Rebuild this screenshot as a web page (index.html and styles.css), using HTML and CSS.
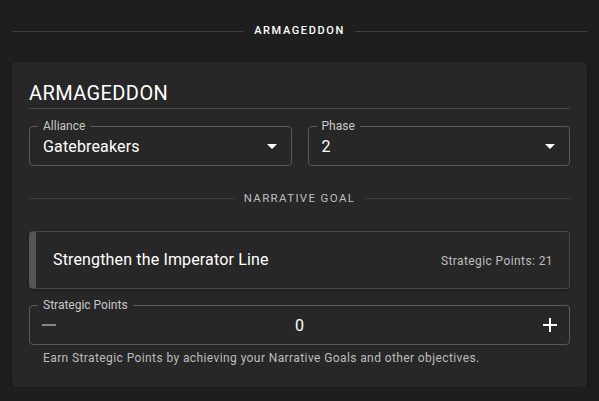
FILE: index.html
```html
<!DOCTYPE html>
<html>
<head>
<meta charset="utf-8">
<link rel="stylesheet" href="styles.css">
</head>
<body>
<div class="page">
  <div class="divider top-divider"><span class="divider-text">ARMAGEDDON</span></div>
  <div class="card">
    <h2 class="card-title">ARMAGEDDON</h2>
    <div class="row">
      <div class="field select">
        <span class="field-label">Alliance</span>
        <span class="field-value">Gatebreakers</span>
        <span class="caret"></span>
      </div>
      <div class="field select">
        <span class="field-label">Phase</span>
        <span class="field-value">2</span>
        <span class="caret"></span>
      </div>
    </div>
    <div class="divider inner-divider"><span class="divider-text muted">NARRATIVE GOAL</span></div>
    <div class="goal">
      <span class="goal-title">Strengthen the Imperator Line</span>
      <span class="goal-points">Strategic Points: 21</span>
    </div>
    <div class="field stepper">
      <span class="field-label">Strategic Points</span>
      <span class="step-btn minus"><svg width="16" height="16" viewBox="0 0 16 16"><rect x="1" y="7" width="14" height="2" fill="#8a8a8a"/></svg></span>
      <span class="step-value">0</span>
      <span class="step-btn plus"><svg width="16" height="16" viewBox="0 0 16 16"><rect x="1" y="7" width="14" height="2" fill="#ffffff"/><rect x="7" y="1" width="2" height="14" fill="#ffffff"/></svg></span>
    </div>
    <p class="helper">Earn Strategic Points by achieving your Narrative Goals and other objectives.</p>
  </div>
</div>
</body>
</html>
```
FILE: styles.css
```css
* { box-sizing: border-box; }
html, body {
  margin: 0;
  padding: 0;
  background: #1e1e1e;
  color: #ffffff;
  font-family: Roboto, "Liberation Sans", sans-serif;
}
.page {
  padding: 23px 12px 0 12px;
}
.divider {
  display: flex;
  align-items: center;
  gap: 10px;
}
.divider::before, .divider::after {
  content: "";
  flex: 1;
  height: 1px;
  background: #3e3e3e;
}
.divider-text {
  font-size: 11px;
  font-weight: 500;
  letter-spacing: 1.6px;
  line-height: 16px;
  color: #ffffff;
}
.divider-text.muted {
  color: #bdbdbd;
  font-weight: 400;
  font-size: 11.5px;
  letter-spacing: 1.35px;
}
.card {
  margin-top: 23px;
  background: #272727;
  border-radius: 4px;
  padding: 19px 17px 22px 17px;
  box-shadow: 0 2px 4px rgba(0,0,0,0.35);
}
.card-title {
  margin: 0;
  font-size: 20px;
  font-weight: 400;
  letter-spacing: 0.4px;
  line-height: 24px;
  padding-bottom: 3px;
  border-bottom: 1px solid #444444;
}
.row {
  display: flex;
  gap: 16px;
  margin-top: 17px;
}
.field {
  position: relative;
  border: 1px solid #5a5a5a;
  border-radius: 4px;
  height: 40px;
  display: flex;
  align-items: center;
}
.select {
  flex: 1;
  padding: 0 14px 0 13px;
}
.field-label {
  position: absolute;
  top: -9px;
  left: 8px;
  padding: 0 5px;
  background: #272727;
  font-size: 12px;
  line-height: 16px;
  color: #c8c8c8;
}
.field-value {
  flex: 1;
  font-size: 16px;
  line-height: 20px;
  letter-spacing: 0.15px;
  padding-top: 2px;
}
.caret {
  width: 0;
  height: 0;
  border-left: 5px solid transparent;
  border-right: 5px solid transparent;
  border-top: 5px solid #ffffff;
}
.inner-divider {
  margin-top: 24px;
}
.goal {
  margin-top: 25px;
  height: 58px;
  border: 1px solid #4a4a4a;
  border-left: 7px solid #555555;
  border-radius: 4px;
  display: flex;
  align-items: center;
  justify-content: space-between;
  padding: 0 16px 0 17px;
  box-shadow: 0 1px 3px rgba(0,0,0,0.3);
}
.goal-title {
  font-size: 16px;
  line-height: 20px;
  letter-spacing: 0.15px;
}
.goal-points {
  font-size: 12px;
  letter-spacing: 0.4px;
  color: #bdbdbd;
  padding-top: 2px;
}
.stepper {
  margin-top: 16px;
  padding: 0 11px 0 11px;
  justify-content: space-between;
}
.step-btn {
  display: flex;
  width: 16px;
  height: 16px;
}
.step-value {
  font-size: 16px;
  line-height: 20px;
  padding-top: 1px;
}
.helper {
  margin: 6px 0 0 14px;
  font-size: 12px;
  line-height: 14px;
  letter-spacing: 0.4px;
  color: #bdbdbd;
}
```
